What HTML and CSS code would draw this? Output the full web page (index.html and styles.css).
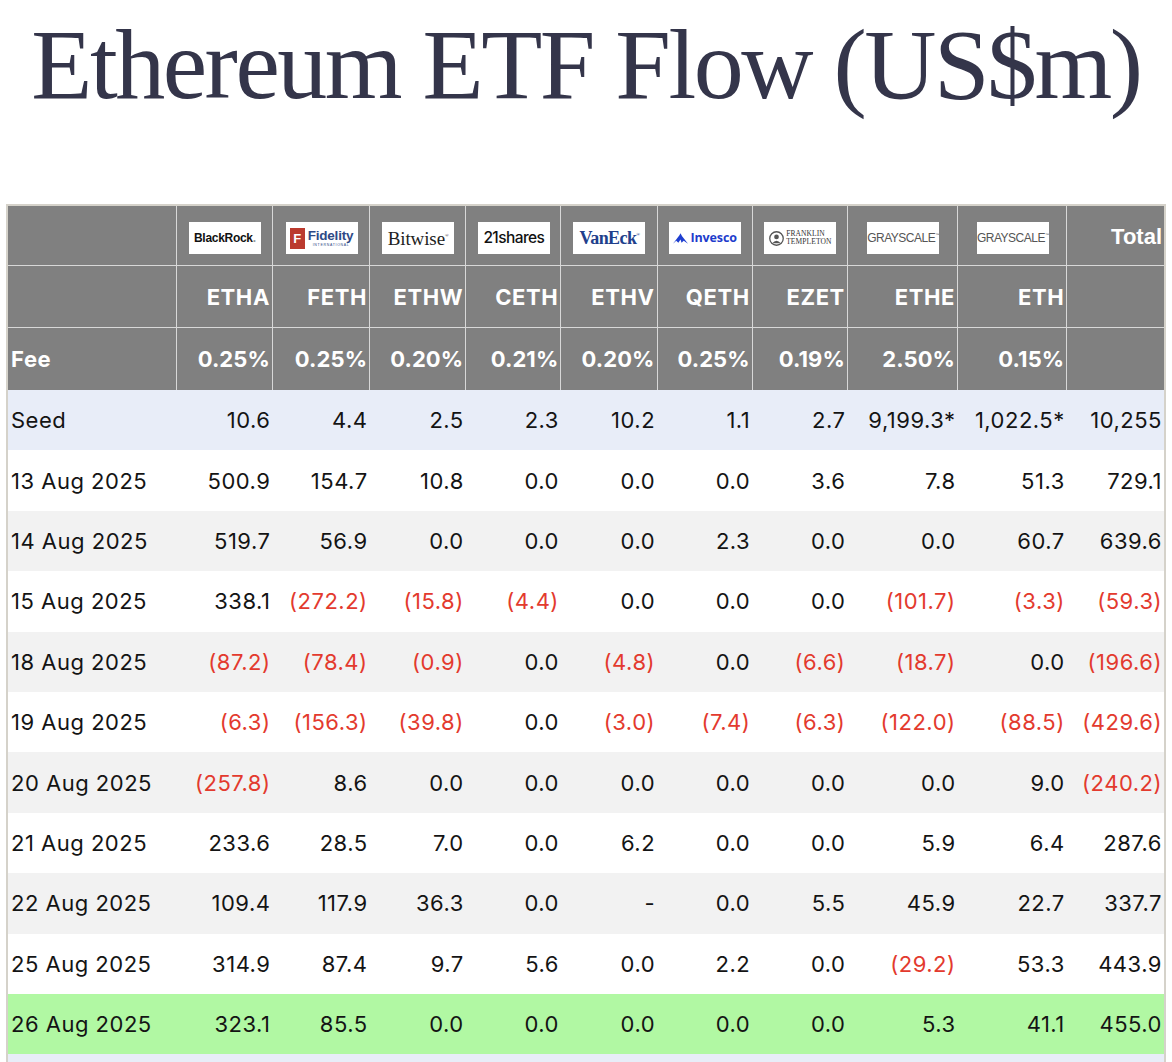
FILE: index.html
```html
<!DOCTYPE html>
<html lang="en">
<head>
<meta charset="utf-8">
<title>Ethereum ETF Flow</title>
<link rel="stylesheet" href="styles.css">
</head>
<body>
<h1 class="title">Ethereum ETF Flow (US$m)</h1>
<table class="flows">
  <colgroup>
    <col class="c-date"><col class="c-96"><col class="c-97"><col class="c-96"><col class="c-95"><col class="c-96"><col class="c-95"><col class="c-95"><col class="c-110"><col class="c-109"><col class="c-98">
  </colgroup>
  <thead>
    <tr class="logos">
      <th></th>
      <th><span class="logo"><span class="blackrock">BlackRock<span class="br-dot">.</span></span></span></th>
      <th><span class="logo"><span class="fid-mark">F</span><span class="fid-text"><span class="fid-name">Fidelity</span><span class="fid-sub">INTERNATIONAL</span></span></span></th>
      <th><span class="logo"><span class="bitwise">Bitwise<sup>®</sup></span></span></th>
      <th><span class="logo"><span class="shares">21shares</span></span></th>
      <th><span class="logo"><span class="vaneck">VanEck<sup>®</sup></span></span></th>
      <th><span class="logo"><svg class="inv-mark" viewBox="0 0 14 10" width="15" height="11"><path d="M0 10 L6 2 L7 0 L8.5 3 L14 10 L10 7 L8 9 L7 6 L5 9 L3 7 Z" fill="#1f3fd0"/></svg><span class="invesco">Invesco</span></span></th>
      <th><span class="logo"><svg class="ft-mark" viewBox="0 0 14 14" width="15" height="15"><circle cx="7" cy="7" r="6.3" fill="none" stroke="#555" stroke-width="1.2"/><circle cx="7" cy="5.5" r="2.2" fill="#555"/><path d="M3 11.5 Q7 6.5 11 11.5 Z" fill="#555"/></svg><span class="ft-text"><span>FRANKLIN</span><span>TEMPLETON</span></span></span></th>
      <th><span class="logo"><span class="grayscale">GRAYSCALE<sup>™</sup></span></span></th>
      <th><span class="logo"><span class="grayscale">GRAYSCALE<sup>™</sup></span></span></th>
      <th class="total">Total</th>
    </tr>
    <tr class="tickers">
      <th></th><th>ETHA</th><th>FETH</th><th>ETHW</th><th>CETH</th><th>ETHV</th><th>QETH</th><th>EZET</th><th>ETHE</th><th>ETH</th><th></th>
    </tr>
    <tr class="fees">
      <th class="lbl">Fee</th><th>0.25%</th><th>0.25%</th><th>0.20%</th><th>0.21%</th><th>0.20%</th><th>0.25%</th><th>0.19%</th><th>2.50%</th><th>0.15%</th><th></th>
    </tr>
  </thead>
  <tbody>
    <tr class="seed">
      <td class="lbl">Seed</td><td>10.6</td><td>4.4</td><td>2.5</td><td>2.3</td><td>10.2</td><td>1.1</td><td>2.7</td><td>9,199.3*</td><td>1,022.5*</td><td>10,255</td>
    </tr>
    <tr class="plain">
      <td class="lbl">13 Aug 2025</td><td>500.9</td><td>154.7</td><td>10.8</td><td>0.0</td><td>0.0</td><td>0.0</td><td>3.6</td><td>7.8</td><td>51.3</td><td>729.1</td>
    </tr>
    <tr class="shade">
      <td class="lbl">14 Aug 2025</td><td>519.7</td><td>56.9</td><td>0.0</td><td>0.0</td><td>0.0</td><td>2.3</td><td>0.0</td><td>0.0</td><td>60.7</td><td>639.6</td>
    </tr>
    <tr class="plain">
      <td class="lbl">15 Aug 2025</td><td>338.1</td><td class="neg">(272.2)</td><td class="neg">(15.8)</td><td class="neg">(4.4)</td><td>0.0</td><td>0.0</td><td>0.0</td><td class="neg">(101.7)</td><td class="neg">(3.3)</td><td class="neg">(59.3)</td>
    </tr>
    <tr class="shade">
      <td class="lbl">18 Aug 2025</td><td class="neg">(87.2)</td><td class="neg">(78.4)</td><td class="neg">(0.9)</td><td>0.0</td><td class="neg">(4.8)</td><td>0.0</td><td class="neg">(6.6)</td><td class="neg">(18.7)</td><td>0.0</td><td class="neg">(196.6)</td>
    </tr>
    <tr class="plain">
      <td class="lbl">19 Aug 2025</td><td class="neg">(6.3)</td><td class="neg">(156.3)</td><td class="neg">(39.8)</td><td>0.0</td><td class="neg">(3.0)</td><td class="neg">(7.4)</td><td class="neg">(6.3)</td><td class="neg">(122.0)</td><td class="neg">(88.5)</td><td class="neg">(429.6)</td>
    </tr>
    <tr class="shade">
      <td class="lbl">20 Aug 2025</td><td class="neg">(257.8)</td><td>8.6</td><td>0.0</td><td>0.0</td><td>0.0</td><td>0.0</td><td>0.0</td><td>0.0</td><td>9.0</td><td class="neg">(240.2)</td>
    </tr>
    <tr class="plain">
      <td class="lbl">21 Aug 2025</td><td>233.6</td><td>28.5</td><td>7.0</td><td>0.0</td><td>6.2</td><td>0.0</td><td>0.0</td><td>5.9</td><td>6.4</td><td>287.6</td>
    </tr>
    <tr class="shade">
      <td class="lbl">22 Aug 2025</td><td>109.4</td><td>117.9</td><td>36.3</td><td>0.0</td><td>-</td><td>0.0</td><td>5.5</td><td>45.9</td><td>22.7</td><td>337.7</td>
    </tr>
    <tr class="plain">
      <td class="lbl">25 Aug 2025</td><td>314.9</td><td>87.4</td><td>9.7</td><td>5.6</td><td>0.0</td><td>2.2</td><td>0.0</td><td class="neg">(29.2)</td><td>53.3</td><td>443.9</td>
    </tr>
    <tr class="latest">
      <td class="lbl">26 Aug 2025</td><td>323.1</td><td>85.5</td><td>0.0</td><td>0.0</td><td>0.0</td><td>0.0</td><td>0.0</td><td>5.3</td><td>41.1</td><td>455.0</td>
    </tr>
    <tr class="seed">
      <td class="lbl"></td><td></td><td></td><td></td><td></td><td></td><td></td><td></td><td></td><td></td><td></td>
    </tr>
  </tbody>
</table>
</body>
</html>
```

FILE: styles.css
```css
html, body {
  margin: 0;
  padding: 0;
  background: #ffffff;
}

body {
  font-family: Inter, "Noto Sans", sans-serif;
  color: #141414;
}

.title {
  margin: 0;
  height: 204px;
  box-sizing: border-box;
  padding-top: 15px;
  font-family: "Liberation Serif", "Times New Roman", serif;
  font-weight: 400;
  font-size: 100px;
  line-height: 1;
  letter-spacing: -2.5px;
  color: #34354a;
  text-align: center;
  white-space: nowrap;
}

.flows {
  margin-left: 6px;
  width: 1160px;
  table-layout: fixed;
  border-collapse: collapse;
  border: 2px solid #d5d2ca;
}

.c-date { width: 169px; }
.c-95 { width: 95px; }
.c-96 { width: 96px; }
.c-97 { width: 97px; }
.c-98 { width: 98px; }
.c-109 { width: 109px; }
.c-110 { width: 110px; }

.flows th {
  background: #808080;
  color: #ffffff;
  border: 1px solid #d8d8d8;
  font-weight: 700;
  font-size: 22px;
  letter-spacing: 0.1px;
  text-align: right;
  padding: 0 2px 0 3px;
  vertical-align: middle;
  white-space: nowrap;
}

.flows th.lbl {
  text-align: left;
  letter-spacing: 0.6px;
}

.logos th {
  height: 59px;
  line-height: 1;
  text-align: center;
  vertical-align: middle;
}

.logos th.total {
  height: 56px;
  text-align: right;
  font-family: "Liberation Sans", Arial, sans-serif;
  font-size: 22px;
  letter-spacing: 0;
  padding-top: 3px;
}

.tickers th {
  height: 61px;
  letter-spacing: 0.6px;
}

.fees th {
  height: 62px;
  border-bottom: 0;
}

.flows td {
  border: none;
  height: 60.4px;
  padding: 0 2px 0 3px;
  text-align: right;
  font-size: 22px;
  letter-spacing: 0.5px;
  white-space: nowrap;
  vertical-align: middle;
}

.flows td.lbl {
  text-align: left;
}

.flows td.neg {
  color: #e33a2e;
}

.seed td { background: #e8edf8; }
.plain td { background: #ffffff; }
.shade td { background: #f2f2f2; }
.latest td { background: #b1f8a3; }

/* logos */
.logo {
  display: inline-flex;
  align-items: center;
  justify-content: center;
  width: 72px;
  height: 32px;
  margin-top: 5px;
  background: #ffffff;
  color: #111;
  letter-spacing: 0;
  font-weight: 400;
  vertical-align: middle;
  overflow: hidden;
}

.blackrock {
  font-family: "Liberation Sans", Arial, sans-serif;
  font-weight: 700;
  font-size: 12px;
  letter-spacing: -0.3px;
  color: #111;
}

.br-dot {
  color: #999;
}

.fid-mark {
  display: inline-flex;
  align-items: center;
  justify-content: center;
  width: 15px;
  height: 21px;
  margin-right: 3px;
  background: #bb3a2e;
  color: #fff;
  font-family: "Liberation Sans", Arial, sans-serif;
  font-weight: 700;
  font-size: 13px;
}

.fid-text {
  display: inline-flex;
  flex-direction: column;
  align-items: flex-start;
  line-height: 1;
}

.fid-name {
  font-family: "Liberation Sans", Arial, sans-serif;
  font-weight: 700;
  font-size: 13.5px;
  color: #2e4a86;
  letter-spacing: -0.2px;
}

.fid-sub {
  font-family: "Liberation Sans", Arial, sans-serif;
  font-size: 3.5px;
  color: #2e4a86;
  letter-spacing: 0.7px;
  margin-top: 1px;
  margin-left: 5px;
}

.bitwise {
  font-family: "Liberation Serif", "Times New Roman", serif;
  font-size: 19px;
  color: #222;
  letter-spacing: -0.1px;
}

.bitwise sup,
.vaneck sup {
  font-size: 5px;
  vertical-align: 8px;
}

.shares {
  font-family: Inter, "Liberation Sans", sans-serif;
  font-size: 15.5px;
  font-weight: 500;
  letter-spacing: -0.6px;
  color: #111;
}

.vaneck {
  font-family: "Liberation Serif", "Times New Roman", serif;
  font-weight: 700;
  font-size: 18px;
  letter-spacing: -0.6px;
  color: #213f8c;
}

.inv-mark {
  margin-right: 2px;
}

.invesco {
  font-family: "Open Sans", "Liberation Sans", sans-serif;
  font-weight: 700;
  font-size: 12.5px;
  color: #1e3ccc;
  letter-spacing: -0.1px;
}

.ft-mark {
  margin-right: 2px;
}

.ft-text {
  display: inline-flex;
  flex-direction: column;
  align-items: flex-start;
  font-family: "Liberation Serif", "Times New Roman", serif;
  font-size: 7.5px;
  line-height: 1.05;
  color: #333;
  letter-spacing: 0.1px;
}

.grayscale {
  font-family: "Liberation Sans", Arial, sans-serif;
  font-size: 12px;
  letter-spacing: -0.5px;
  color: #555;
}

.grayscale sup {
  font-size: 4px;
  vertical-align: 6px;
}
```
